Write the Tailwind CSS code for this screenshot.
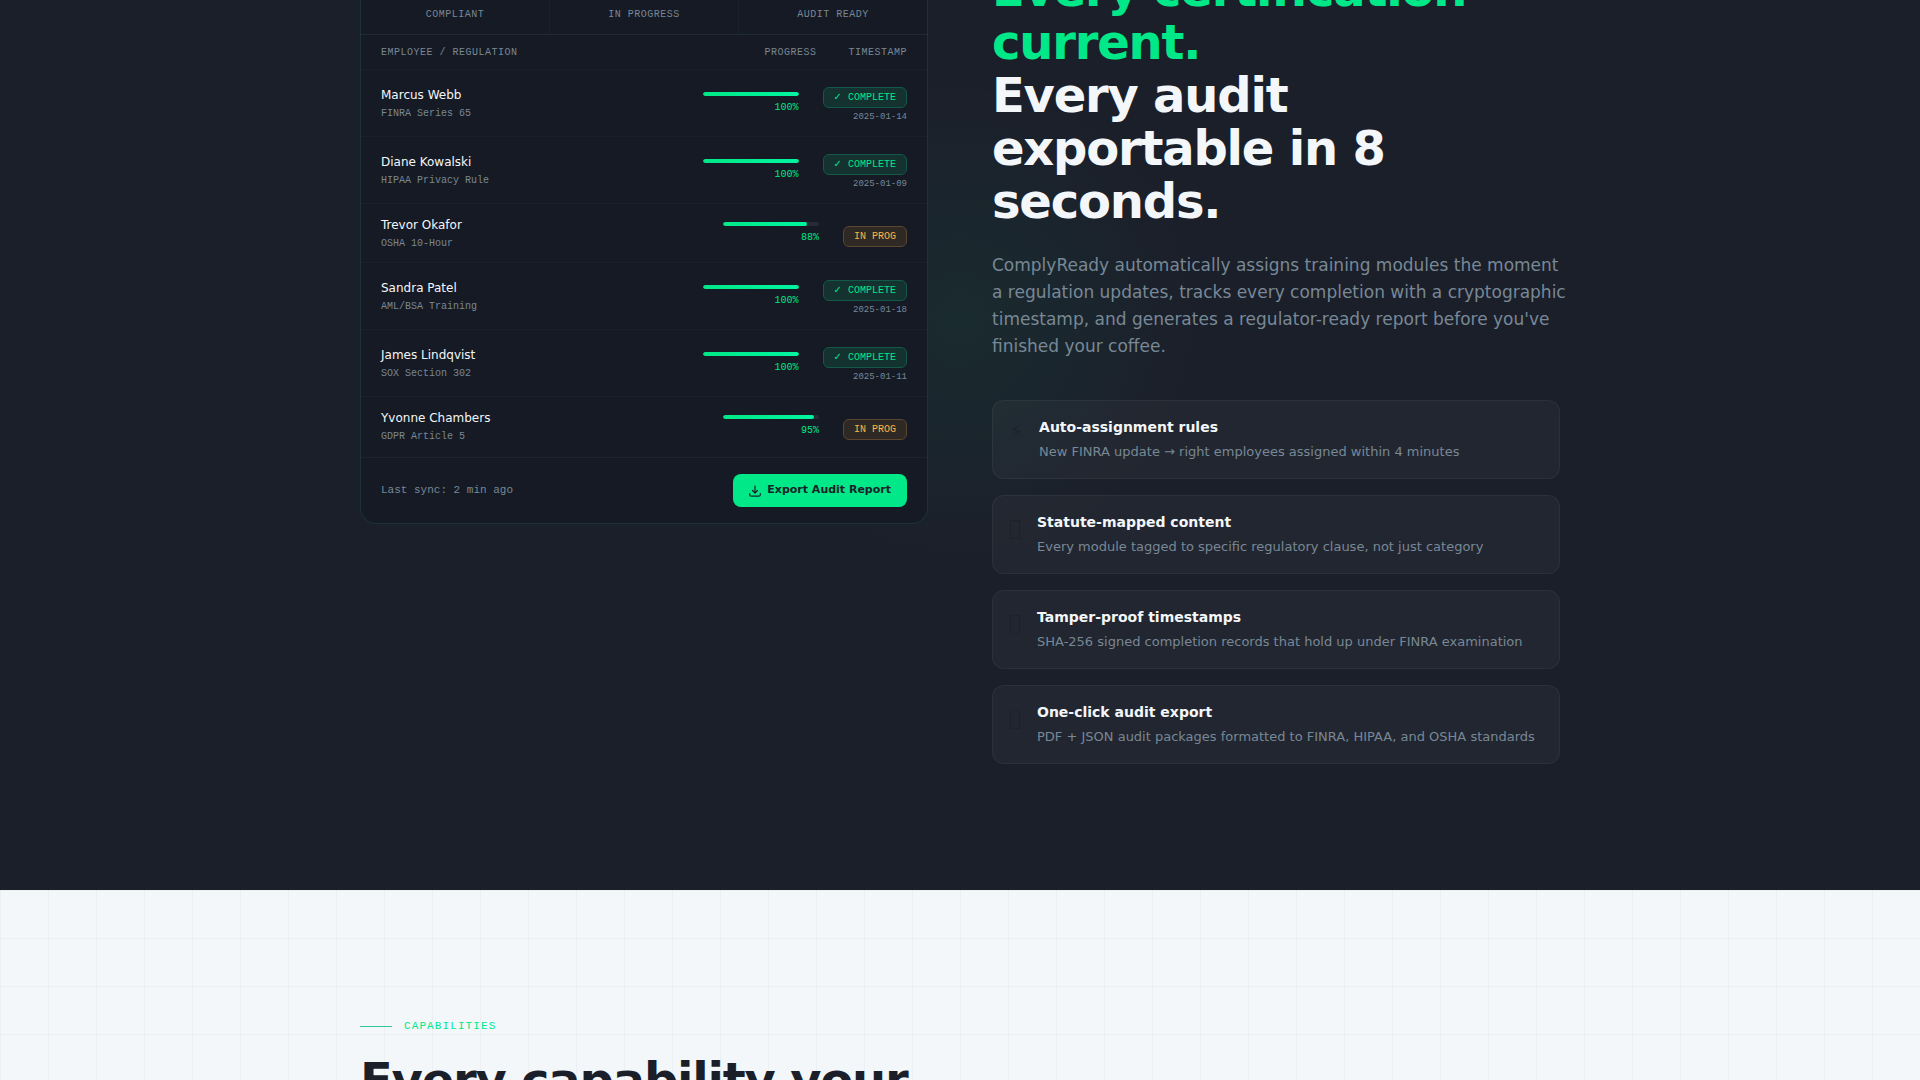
<!DOCTYPE html>
<html lang="en">
<head>
<meta charset="utf-8">
<meta name="viewport" content="width=device-width, initial-scale=1">
<title>ComplyReady</title>
<script src="https://cdn.jsdelivr.net/npm/@tailwindcss/browser@4"></script>
</head>
<body class="h-screen overflow-hidden bg-[#f3f7fa] font-['DejaVu_Sans',sans-serif] text-[#1b1f2a]">
<main>
  <section class="bg-[#1b1f2a] bg-[radial-gradient(circle_at_50%_320px,rgba(0,232,135,0.06)_0px,rgba(0,232,135,0)_240px)] pb-[126px]">
    <div class="mx-auto grid max-w-[1200px] grid-cols-2 items-start gap-16">

      <div class="overflow-hidden rounded-b-2xl border border-t-0 border-[#1b3237] bg-[#161a24]">
        <dl class="grid grid-cols-3 gap-px border-b border-[#1d2b33] bg-[#1b212b] font-['Liberation_Mono',monospace] text-[10px] leading-4 tracking-[0.5px] text-[#788896]">
          <dt class="bg-[#161a24] pt-[7px] pb-[11px] text-center">COMPLIANT</dt>
          <dt class="bg-[#161a24] pt-[7px] pb-[11px] text-center">IN PROGRESS</dt>
          <dt class="bg-[#161a24] pt-[7px] pb-[11px] text-center">AUDIT READY</dt>
        </dl>
        <table class="block font-['Liberation_Mono','DejaVu_Sans',monospace] text-[10px] leading-[15px] text-[#788896]">
          <thead class="block">
            <tr class="flex gap-8 border-b border-[#1a1f29] px-5 pt-2.5 pb-2 leading-4 tracking-[0.5px]">
              <th class="flex-1 text-left font-normal">EMPLOYEE / REGULATION</th>
              <th class="font-normal">PROGRESS</th>
              <th class="font-normal">TIMESTAMP</th>
            </tr>
          </thead>
          <tbody id="rows" class="block pb-0.5"></tbody>
        </table>
        <div class="flex items-center justify-between border-t border-[#1b242d] px-5 py-4">
          <span class="font-['Liberation_Mono',monospace] text-[11px] leading-[17px] text-[#788896]">Last sync: 2 min ago</span>
          <button type="button" class="flex h-[33px] items-center gap-1.5 rounded-lg bg-[#00e887] px-4 text-[11px] font-bold text-[#1b1f2a]">
            <svg class="size-3" viewBox="0 0 12 12" fill="none" stroke="currentColor" stroke-width="1.2" stroke-linecap="round" stroke-linejoin="round" aria-hidden="true"><path d="M6 1v7M3.500 5.500 6 8l2.500-2.500M.7 8.700v1c0 .9.600 1.500 1.500 1.500h7.600c.9 0 1.500-.6 1.500-1.500v-1"/></svg>
            Export Audit Report
          </button>
        </div>
      </div>

      <div class="-mt-[37px]">
        <h2 class="text-5xl leading-[53px] font-bold tracking-tight text-[#f3f7fa]"><span class="text-[#00e887]">Every certification current.</span><br>Every audit exportable in 8 seconds.</h2>
        <p class="mt-6 -mr-2 text-[17px] leading-[27px] text-[#788896]">ComplyReady automatically assigns training modules the moment a regulation updates, tracks every completion with a cryptographic timestamp, and generates a regulator-ready report before you've finished your coffee.</p>
        <ul id="features" class="mt-10 flex flex-col gap-4"></ul>
      </div>
    </div>
  </section>

  <section class="bg-[linear-gradient(rgba(27,31,42,0.03)_1px,transparent_1px),linear-gradient(90deg,rgba(27,31,42,0.03)_1px,transparent_1px)] bg-[size:48px_48px] py-32">
    <div class="mx-auto max-w-[1200px]">
      <div class="flex items-center gap-3 font-['Liberation_Mono',monospace] text-[11px] leading-4 tracking-[0.1em] text-[#00e887]">
        <span class="h-px w-8 bg-[#2fc893]"></span>CAPABILITIES
      </div>
      <h2 class="mt-5 max-w-[640px] text-5xl leading-[53px] font-bold tracking-tight">Every capability your</h2>
    </div>
  </section>
</main>
<script>
const rows = [
  ["Marcus Webb", "FINRA Series 65", 100, "2025-01-14"],
  ["Diane Kowalski", "HIPAA Privacy Rule", 100, "2025-01-09"],
  ["Trevor Okafor", "OSHA 10-Hour", 88, ""],
  ["Sandra Patel", "AML/BSA Training", 100, "2025-01-18"],
  ["James Lindqvist", "SOX Section 302", 100, "2025-01-11"],
  ["Yvonne Chambers", "GDPR Article 5", 95, ""],
];
document.getElementById("rows").innerHTML = rows.map(([name, rule, pct, date]) => `
  <tr class="flex items-center gap-6 border-b border-[#1a1f29] px-5 py-3.5 last:border-b-0">
    <td class="flex-1"><div class="text-xs leading-[15px] text-[#f3f7fa] font-['DejaVu_Sans',sans-serif]">${name}</div><div class="mt-[7px] leading-[8px]">${rule}</div></td>
    <td class="w-24 text-right text-[#00e887]"><div class="mb-1 h-1 overflow-hidden rounded-full bg-[#272b34]"><div class="h-full rounded-full bg-linear-to-r from-[#00e887] to-[#00f5a0]" style="width:${pct}%"></div></div>${pct}%</td>
    <td class="flex flex-col items-end">${date
      ? `<span class="mt-[3px] rounded-md border border-[#12594a] bg-[#14322f] px-2.5 py-0.5 text-[#00e887]">✓ COMPLETE</span><time class="mt-1 text-[9px] leading-[10px]">${date}</time>`
      : `<span class="mt-1.5 rounded-md border border-[#5b4730] bg-[#2f2926] px-2.5 py-0.5 text-[#ffb347]">IN PROG</span>`}</td>
  </tr>`).join("");

const bolt = `<span class="text-xl leading-7 text-[#1b1f2a]/70" aria-hidden="true">⚡</span>`;
const box = `<span class="flex w-3 justify-center pt-2" aria-hidden="true"><span class="h-[19px] w-2.5 border border-[#1b1f2a]/70"></span></span>`;
const features = [
  [bolt, "Auto-assignment rules", "New FINRA update → right employees assigned within 4 minutes"],
  [box, "Statute-mapped content", "Every module tagged to specific regulatory clause, not just category"],
  [box, "Tamper-proof timestamps", "SHA-256 signed completion records that hold up under FINRA examination"],
  [box, "One-click audit export", "PDF + JSON audit packages formatted to FINRA, HIPAA, and OSHA standards"],
];
document.getElementById("features").innerHTML = features.map(([icon, title, text]) => `
  <li class="flex gap-4 rounded-xl border border-white/5 bg-white/[0.03] p-4">
    ${icon}
    <div><h3 class="text-sm leading-[21px] font-bold text-[#f3f7fa]">${title}</h3><p class="mt-1 text-[13px] leading-5 text-[#788896]">${text}</p></div>
  </li>`).join("");
</script>
</body>
</html>
